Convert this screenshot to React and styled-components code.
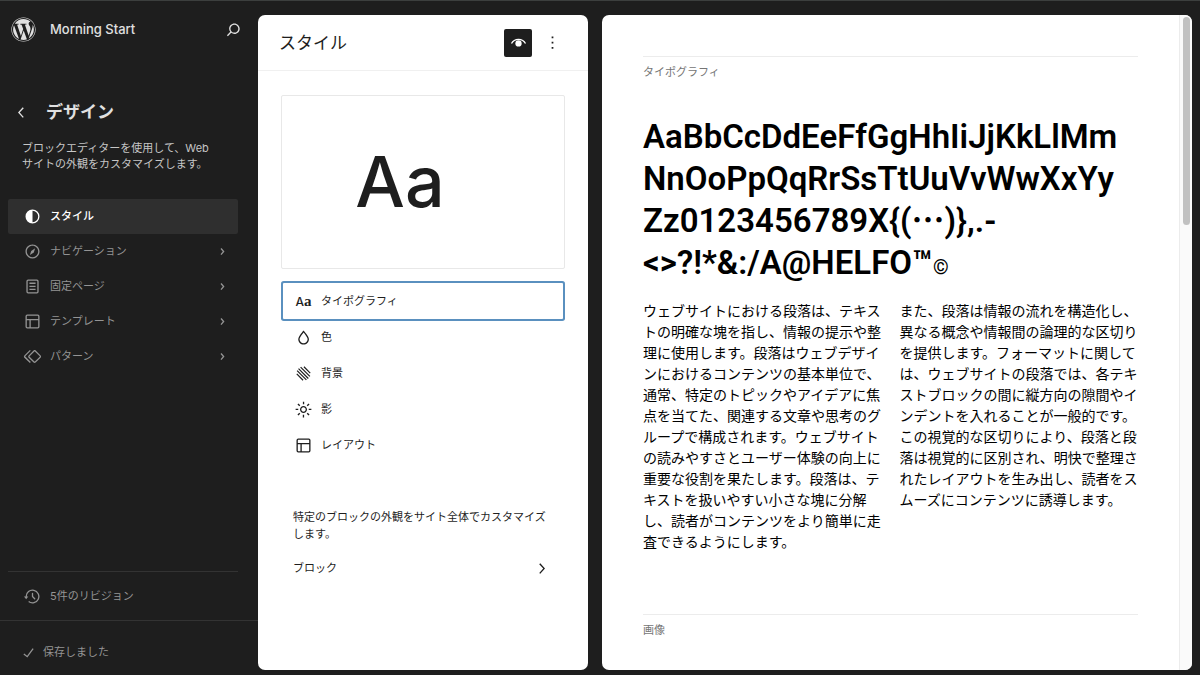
import { useState } from "react";
import styled, { createGlobalStyle, css } from "styled-components";
import { FaWordpress } from "react-icons/fa";

const GlobalStyle = createGlobalStyle`
  * {
    box-sizing: border-box;
  }

  body {
    margin: 0;
    background: #1e1e1e;
    font-family: Inter, "Noto Sans CJK JP", sans-serif;
    font-size: 11px;
    line-height: 17px;
  }

  h1, h2, p, ul {
    margin: 0;
    padding: 0;
  }

  ul {
    list-style: none;
  }

  button {
    border: 0;
    padding: 0;
    background: none;
    color: inherit;
    font: inherit;
    cursor: pointer;
  }
`;

const Layout = styled.div`
  min-height: 100vh;
  display: flex;
  border-top: 1px solid #3c3f3e;
  background: #1e1e1e;
`;

const Svg = styled.svg`
  width: ${(props) => props.$size || 21}px;
  height: ${(props) => props.$size || 21}px;
  flex: none;
  display: block;
  fill: currentColor;
`;

/* sidebar */

const Sidebar = styled.aside`
  width: 258px;
  flex: none;
  display: flex;
  flex-direction: column;
  color: #949494;
`;

const SiteHub = styled.header`
  height: 56px;
  padding: 0 14px 0 11px;
  display: flex;
  align-items: center;
  color: #e0e0e0;
`;

const SiteTitle = styled.a`
  margin-left: 14px;
  flex: 1;
  color: inherit;
  font-size: 13px;
  font-weight: 500;
  text-decoration: none;
`;

const ScreenHeader = styled.div`
  margin-top: 43px;
  padding: 0 11px;
  display: flex;
  align-items: center;
  gap: 14px;
  color: #e0e0e0;
`;

const ScreenTitle = styled.h1`
  font-size: 17px;
  font-weight: 700;
  line-height: 24px;
`;

const ScreenText = styled.p`
  padding: 16px 36px 0 22px;
  color: #c6c6c6;
  line-height: 16px;
`;

const NavList = styled.ul`
  margin: 27px 20px 0 8px;
`;

const NavItem = styled.button`
  width: 100%;
  height: 35px;
  padding: 0 5px 0 14px;
  display: flex;
  align-items: center;
  gap: 7px;
  border-radius: 2px;
  text-align: left;

  ${(props) =>
    props.$active &&
    css`
      background: #2f2f2f;
      color: #fff;
      font-weight: 500;
    `}
`;

const Label = styled.span`
  flex: 1;
`;

const SidebarFooter = styled.div`
  margin: auto 20px 0 8px;
  padding: 7px 0 6px;
  border-top: 1px solid #333;
`;

const SaveHub = styled.div`
  height: 55px;
  padding: 8px 18px 0;
  display: flex;
  align-items: center;
  gap: 4px;
  border-top: 1px solid #333;
`;

/* styles panel */

const Panel = styled.section`
  width: 330px;
  flex: none;
  margin: 14px 14px 5px 0;
  border-radius: 7px;
  background: #fff;
  color: #1e1e1e;
`;

const PanelHeader = styled.header`
  height: 56px;
  padding: 0 25px 0 21px;
  display: flex;
  align-items: center;
  gap: 10px;
  border-bottom: 1px solid #f0f0f0;
`;

const PanelTitle = styled.h2`
  flex: 1;
  font-size: 17px;
  font-weight: 400;
  line-height: 24px;
`;

const IconButton = styled.button`
  width: ${(props) => (props.$pressed ? 28 : 21)}px;
  height: 28px;
  display: flex;
  align-items: center;
  justify-content: center;
  border-radius: 2px;
  background: ${(props) => (props.$pressed ? "#1e1e1e" : "none")};
  color: ${(props) => (props.$pressed ? "#fff" : "#1e1e1e")};
`;

const PanelBody = styled.div`
  padding: 24px 23px;
`;

const StylePreview = styled.div`
  height: 174px;
  padding-right: 46px;
  display: flex;
  align-items: center;
  justify-content: center;
  border: 1px solid #e8e8e8;
  border-radius: 2px;
  font-size: 70px;
  font-weight: 500;
  line-height: 88px;
`;

const StyleList = styled.ul`
  padding: 14px 2px 0;
`;

const StyleItem = styled.button`
  width: 100%;
  height: 36px;
  padding: 0 10px;
  display: flex;
  align-items: center;
  gap: 7px;
  border-radius: 1px;
  text-align: left;
  box-shadow: ${(props) => (props.$focused ? "0 0 0 2px #5a90bf" : "none")};
`;

const Letters = styled.span`
  width: 21px;
  flex: none;
  text-align: center;
  font-size: 12px;
  font-weight: 500;
`;

const SerifLetter = styled.span`
  font-family: "Liberation Serif", serif;
  font-size: 15px;
  font-weight: 700;
`;

const BlockText = styled.p`
  padding: 46px 12px 0;
`;

const BlockLink = styled.button`
  width: 100%;
  height: 36px;
  margin-top: 7px;
  padding: 0 13px 0 12px;
  display: flex;
  align-items: center;
  text-align: left;
`;

/* style book */

const Preview = styled.main`
  min-width: 0;
  flex: 1;
  display: flex;
  margin: 14px 8px 5px 0;
  border-radius: 7px;
  background: #fff;
  color: #000;
  overflow: hidden;
`;

const Book = styled.div`
  min-width: 0;
  flex: 1;
  padding: 41px 41px 0;
`;

const Example = styled.section`
  border-top: 1px solid #ececec;
  padding-top: 7px;
`;

const ExampleTitle = styled.h2`
  color: #757575;
  font-size: 11px;
  font-weight: 400;
  line-height: 17px;
`;

const Specimen = styled.p`
  margin-top: 35px;
  font-family: Roboto, "Noto Sans CJK JP", sans-serif;
  font-size: 33px;
  font-weight: 600;
  line-height: 42px;

  small {
    font-size: 20px;
    line-height: 1;
  }
`;

const Columns = styled.div`
  margin: 16px 0 62px;
  display: grid;
  grid-template-columns: 1fr 1fr;
  gap: 18px;
  font-family: "Noto Sans CJK JP", sans-serif;
  font-size: 14px;
  line-height: 21px;
`;

const Track = styled.div`
  width: 13px;
  flex: none;
  padding: 2px 3px;
  border-left: 1px solid #ececec;
  background: #fafafa;
`;

const Thumb = styled.div`
  width: 7px;
  height: 208px;
  border-radius: 4px;
  background: #c1c1c1;
`;

const paths = {
  search:
    "M13 5c-3.3 0-6 2.7-6 6 0 1.4.5 2.7 1.3 3.7l-3.8 3.8 1.1 1.1 3.8-3.8c1 .8 2.3 1.3 3.7 1.3 3.3 0 6-2.7 6-6S16.3 5 13 5zm0 10.5c-2.5 0-4.5-2-4.5-4.5s2-4.5 4.5-4.5 4.5 2 4.5 4.5-2 4.5-4.5 4.5z",
  back: "M14.6 7l-1.2-1L8 12l5.4 6 1.2-1-4.6-5z",
  next: "M10.6 6L9.4 7l4.6 5-4.6 5 1.2 1 5.4-6z",
  nextSmall:
    "M10.86 8.04l3.42 3.99-3.42 3.99-1.14-.98 2.58-3.01-2.58-3.01z",
  styles:
    "M20 12a8 8 0 1 1-16 0 8 8 0 0 1 16 0Zm-1.5 0a6.5 6.5 0 0 1-6.5 6.5v-13a6.5 6.5 0 0 1 6.5 6.5Z",
  navigation:
    "M12 4c-4.4 0-8 3.6-8 8s3.6 8 8 8 8-3.6 8-8-3.6-8-8-8zm0 14.5c-3.6 0-6.5-2.9-6.5-6.5S8.4 5.5 12 5.5s6.5 2.9 6.5 6.5-2.9 6.5-6.5 6.5zM9 16l4.5-3L15 8.4l-4.5 3L9 16z",
  page: "M15.5 7.5h-7V9h7V7.5Zm-7 3.5h7v1.5h-7V11Zm7 3.5h-7V16h7v-1.5ZM17 4H7a2 2 0 0 0-2 2v12a2 2 0 0 0 2 2h10a2 2 0 0 0 2-2V6a2 2 0 0 0-2-2ZM7 5.5h10a.5.5 0 0 1 .5.5v12a.5.5 0 0 1-.5.5H7a.5.5 0 0 1-.5-.5V6a.5.5 0 0 1 .5-.5Z",
  layout:
    "M18 5.5H6a.5.5 0 00-.5.5v3h13V6a.5.5 0 00-.5-.5zm.5 5H10v8h8a.5.5 0 00.5-.5v-7.5zm-10 0h-3V18a.5.5 0 00.5.5h2.5v-8zM6 4h12a2 2 0 012 2v12a2 2 0 01-2 2H6a2 2 0 01-2-2V6a2 2 0 012-2z",
  symbol:
    "M21.3 10.8l-5.6-5.6c-.7-.7-1.8-.7-2.5 0l-5.6 5.6c-.7.7-.7 1.8 0 2.5l5.6 5.6c.3.3.8.5 1.2.5s.9-.2 1.2-.5l5.6-5.6c.8-.7.8-1.9.1-2.5zm-1 1.4l-5.6 5.6c-.1.1-.3.1-.4 0l-5.6-5.6c-.1-.1-.1-.3 0-.4l5.6-5.6s.1-.1.2-.1.1 0 .2.1l5.6 5.6c.1.1.1.3 0 .4zm-16.6-.4L10 5.5l-1-1-6.3 6.3c-.7.7-.7 1.8 0 2.5L9 19.5l1.1-1.1-6.3-6.3c-.2 0-.2-.2-.1-.3z",
  backup:
    "M5.5 12h1.75l-2.5 3-2.5-3H4a8 8 0 113.134 6.35l.907-1.194A6.5 6.5 0 105.5 12zm9.53 1.97l-2.28-2.28V8.5a.75.75 0 00-1.5 0V12a.747.747 0 00.218.529l2.502 2.502a.75.75 0 101.06-1.061z",
  check: "M16.7 7.1l-6.3 8.5-3.3-2.5-.9 1.2 4.5 3.4L17.9 8z",
  more: "M13 19h-2v-2h2v2zm0-6h-2v-2h2v2zm0-6h-2V5h2v2z",
  color:
    "M17.2 10.9c-.5-1-1.2-2.1-2.1-3.2-.6-.9-1.3-1.7-2.1-2.6L12 4l-1 1.1c-.6.9-1.3 1.7-2 2.6-.8 1.2-1.5 2.3-2 3.2-.6 1.2-1 2.2-1 3 0 3.4 2.7 6.1 6.1 6.1s6.1-2.7 6.1-6.1c0-.8-.3-1.8-1-3zm-5.1 7.6c-2.5 0-4.6-2.1-4.6-4.6 0-.3.1-1 .8-2.3.5-.9 1.1-1.9 2-3.1.7-.9 1.3-1.7 1.8-2.3.7.8 1.3 1.6 1.8 2.3.8 1.1 1.5 2.2 2 3.1.7 1.3.8 2 .8 2.3 0 2.5-2.1 4.6-4.6 4.6z",
  shadow:
    "M12 8c-2.2 0-4 1.8-4 4s1.8 4 4 4 4-1.8 4-4-1.8-4-4-4zm0 6.5c-1.4 0-2.5-1.1-2.5-2.5s1.1-2.5 2.5-2.5 2.5 1.1 2.5 2.5-1.1 2.5-2.5 2.5zM12.8 3h-1.5v3h1.5V3zm-1.6 18h1.5v-3h-1.5v3zm6.8-9.8v1.5h3v-1.5h-3zm-12 0H3v1.5h3v-1.5zm9.7 5.6 2.1 2.1 1.1-1.1-2.1-2.1-1.1 1.1zM8.3 7.2 6.2 5.1 5.1 6.2l2.1 2.1 1.1-1.1zM5.1 17.8l1.1 1.1 2.1-2.1-1.1-1.1-2.1 2.1zM18.9 6.2l-1.1-1.1-2.1 2.1 1.1 1.1 2.1-2.1z",
};

const Icon = ({ name, size }) => (
  <Svg viewBox="0 0 24 24" $size={size} aria-hidden="true">
    <path fillRule="evenodd" d={paths[name]} />
  </Svg>
);

const EyeIcon = () => (
  <Svg viewBox="0 0 24 24" aria-hidden="true">
    <path
      d="M4 13.2C4.6 12 7 8.4 12 8.4s7.4 3.6 8 4.8"
      fill="none"
      stroke="currentColor"
      strokeWidth="1.5"
    />
    <circle cx="12" cy="13" r="3.6" />
  </Svg>
);

const BackgroundIcon = () => (
  <Svg viewBox="0 0 24 24" aria-hidden="true">
    <path
      d="M12.5 4.3l7.2 7.2M8.7 4.7l10.6 10.6M6.3 6.5l11.2 11.2M4.7 8.7l10.6 10.6M4.3 12.5l7.2 7.2"
      fill="none"
      stroke="currentColor"
      strokeWidth="1.4"
    />
  </Svg>
);

const TypographyIcon = () => (
  <Letters aria-hidden="true">
    A<SerifLetter>a</SerifLetter>
  </Letters>
);

const navItems = [
  { label: "スタイル", icon: "styles" },
  { label: "ナビゲーション", icon: "navigation" },
  { label: "固定ページ", icon: "page" },
  { label: "テンプレート", icon: "layout" },
  { label: "パターン", icon: "symbol" },
];

const styleItems = [
  { label: "タイポグラフィ", icon: <TypographyIcon /> },
  { label: "色", icon: <Icon name="color" /> },
  { label: "背景", icon: <BackgroundIcon /> },
  { label: "影", icon: <Icon name="shadow" /> },
  { label: "レイアウト", icon: <Icon name="layout" /> },
];

const App = () => {
  const [screen, setScreen] = useState("スタイル");
  const [section, setSection] = useState("タイポグラフィ");
  const [bookOpen, setBookOpen] = useState(true);

  return (
    <Layout lang="ja">
      <GlobalStyle />
      <Sidebar>
        <SiteHub>
          <FaWordpress size={25} />
          <SiteTitle href="#">Morning Start</SiteTitle>
          <button type="button" aria-label="検索">
            <Icon name="search" />
          </button>
        </SiteHub>
        <ScreenHeader>
          <button type="button" aria-label="戻る">
            <Icon name="back" />
          </button>
          <ScreenTitle>デザイン</ScreenTitle>
        </ScreenHeader>
        <ScreenText>
          ブロックエディターを使用して、Web サイトの外観をカスタマイズします。
        </ScreenText>
        <nav>
          <NavList>
            {navItems.map(({ label, icon }) => (
              <li key={label}>
                <NavItem
                  type="button"
                  $active={screen === label}
                  onClick={() => setScreen(label)}
                >
                  <Icon name={icon} />
                  <Label>{label}</Label>
                  {label !== "スタイル" && <Icon name="nextSmall" />}
                </NavItem>
              </li>
            ))}
          </NavList>
        </nav>
        <SidebarFooter>
          <NavItem type="button">
            <Icon name="backup" />
            <Label>5件のリビジョン</Label>
          </NavItem>
        </SidebarFooter>
        <SaveHub>
          <Icon name="check" />
          <span>保存しました</span>
        </SaveHub>
      </Sidebar>

      <Panel>
        <PanelHeader>
          <PanelTitle>スタイル</PanelTitle>
          <IconButton
            type="button"
            aria-label="スタイルブック"
            aria-pressed={bookOpen}
            $pressed={bookOpen}
            onClick={() => setBookOpen(!bookOpen)}
          >
            <EyeIcon />
          </IconButton>
          <IconButton type="button" aria-label="その他">
            <Icon name="more" />
          </IconButton>
        </PanelHeader>
        <PanelBody>
          <StylePreview>Aa</StylePreview>
          <StyleList>
            {styleItems.map(({ label, icon }) => (
              <li key={label}>
                <StyleItem
                  type="button"
                  $focused={section === label}
                  onClick={() => setSection(label)}
                >
                  {icon}
                  <span>{label}</span>
                </StyleItem>
              </li>
            ))}
          </StyleList>
          <BlockText>
            特定のブロックの外観をサイト全体でカスタマイズします。
          </BlockText>
          <BlockLink type="button">
            <Label>ブロック</Label>
            <Icon name="next" />
          </BlockLink>
        </PanelBody>
      </Panel>

      <Preview>
        <Book>
          <Example>
            <ExampleTitle>タイポグラフィ</ExampleTitle>
            <Specimen>
              AaBbCcDdEeFfGgHhIiJjKkLlMm
              <wbr />
              NnOoPpQqRrSsTtUuVvWwXxYy
              <wbr />
              Zz0123456789X{"{(⋯)}"},.-
              <br />
              {"<>?!*&:/A@HELFO™"}
              <small>©</small>
            </Specimen>
            <Columns>
              <p>
                ウェブサイトにおける段落は、テキストの明確な塊を指し、情報の提示や整理に使用します。段落はウェブデザインにおけるコンテンツの基本単位で、通常、特定のトピックやアイデアに焦点を当てた、関連する文章や思考のグループで構成されます。ウェブサイトの読みやすさとユーザー体験の向上に重要な役割を果たします。段落は、テキストを扱いやすい小さな塊に分解し、読者がコンテンツをより簡単に走査できるようにします。
              </p>
              <p>
                また、段落は情報の流れを構造化し、異なる概念や情報間の論理的な区切りを提供します。フォーマットに関しては、ウェブサイトの段落では、各テキストブロックの間に縦方向の隙間やインデントを入れることが一般的です。この視覚的な区切りにより、段落と段落は視覚的に区別され、明快で整理されたレイアウトを生み出し、読者をスムーズにコンテンツに誘導します。
              </p>
            </Columns>
          </Example>
          <Example>
            <ExampleTitle>画像</ExampleTitle>
          </Example>
        </Book>
        <Track>
          <Thumb />
        </Track>
      </Preview>
    </Layout>
  );
};

export default App;
